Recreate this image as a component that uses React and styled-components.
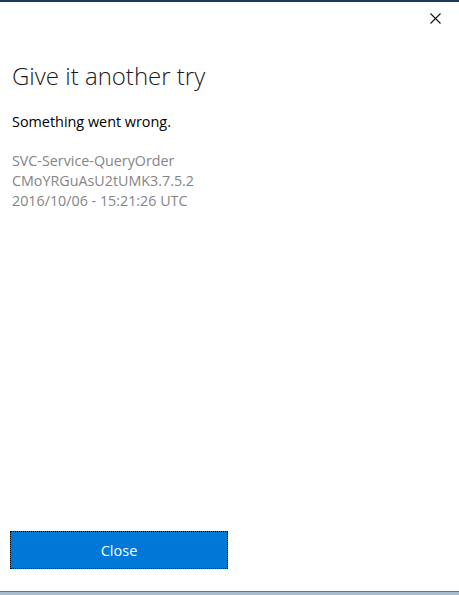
import styled, { createGlobalStyle } from "styled-components";

const GlobalStyle = createGlobalStyle`
  html, body {
    margin: 0;
    padding: 0;
    background: #fff;
  }
  body {
    font-family: "Open Sans", "Noto Sans", "Liberation Sans", sans-serif;
  }
`;

const Dialog = styled.div`
  width: 459px;
  height: 595px;
  display: flex;
  flex-direction: column;
  box-sizing: border-box;
  border-top: 2px solid #1d3a5e;
  background: #fff;
`;

const TopBar = styled.div`
  display: flex;
  justify-content: flex-end;
  padding: 9px 17px 0 0;
  height: 24px;
`;

const CloseIcon = styled.button`
  border: none;
  background: none;
  padding: 0;
  width: 14px;
  height: 14px;
  display: flex;
  align-items: center;
  justify-content: center;
  cursor: pointer;
`;

const Content = styled.div`
  flex: 1;
  padding: 25px 12px 0 12px;
`;

const Title = styled.h1`
  margin: 0;
  font-weight: 300;
  font-size: 24px;
  line-height: 32px;
  color: #1a1a1a;
`;

const Message = styled.p`
  margin: 20px 0 0 0;
  font-size: 14.4px;
  line-height: 20px;
  color: #000;
`;

const Details = styled.div`
  margin-top: 19px;
  display: flex;
  flex-direction: column;
  font-size: 14.3px;
  line-height: 20px;
  color: #858585;
`;

const Footer = styled.div`
  padding: 0 0 22px 10px;
`;

const PrimaryButton = styled.button`
  width: 218px;
  height: 38px;
  background: #0078d7;
  color: #fff;
  border: 1px dotted #000;
  font-family: inherit;
  font-size: 14.5px;
  cursor: pointer;
`;

const BottomEdge = styled.div`
  height: 3px;
  border-top: 1px solid #3a80be;
  background: #a8bccf;
`;

export default function App() {
  return (
    <>
      <GlobalStyle />
      <Dialog>
        <TopBar>
          <CloseIcon aria-label="Close">
            <svg width="11" height="11" viewBox="0 0 11 11">
              <path d="M0.5 0.5 L10.5 10.5 M10.5 0.5 L0.5 10.5" stroke="#111" strokeWidth="1.1" fill="none" />
            </svg>
          </CloseIcon>
        </TopBar>
        <Content>
          <Title>Give it another try</Title>
          <Message>Something went wrong.</Message>
          <Details>
            <span>SVC-Service-QueryOrder</span>
            <span>CMoYRGuAsU2tUMK3.7.5.2</span>
            <span>2016/10/06 - 15:21:26 UTC</span>
          </Details>
        </Content>
        <Footer>
          <PrimaryButton>Close</PrimaryButton>
        </Footer>
        <BottomEdge />
      </Dialog>
    </>
  );
}
